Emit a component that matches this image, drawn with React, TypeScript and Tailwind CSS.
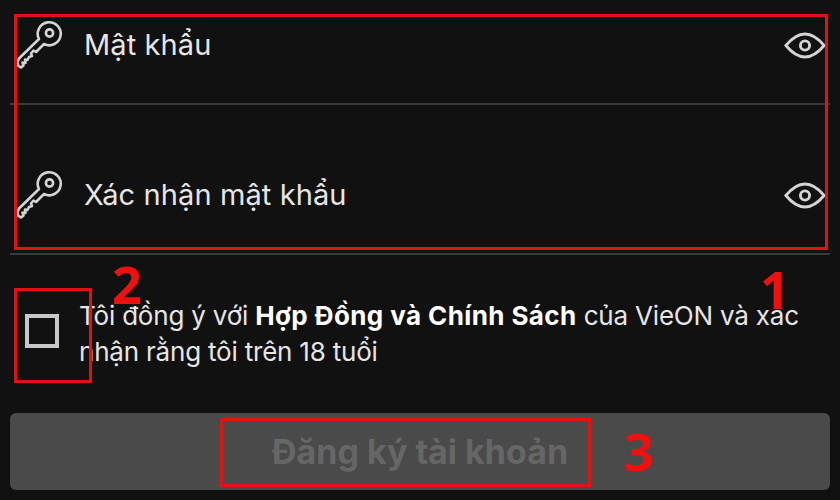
import { ReactNode } from 'react'

function KeyIcon() {
  return (
    <svg viewBox="16 20 48 50" className="w-12 h-[50px] shrink-0" fill="none" stroke="#d4d4d4" strokeWidth="2.6" strokeLinejoin="round" strokeLinecap="round">
      <path d="M39 39 A11.5 11.5 0 1 1 44 44 L36 52 L33.500 50.500 L31 53.500 L32 56 L29 57 L27.500 60 L25 59.500 L25.500 63 L22.500 62.500 L23.500 65.500 L21 67.500 L18 65.500 L17.500 62 L19 58.500 Z" />
      <circle cx="49.500" cy="33" r="3.600" />
    </svg>
  )
}

function EyeIcon() {
  return (
    <svg viewBox="0 0 44 28" className="w-[42px] h-[27px] shrink-0" fill="none" stroke="#d4d4d4" strokeWidth="3">
      <path d="M2 14 C9 5.500 15 2 22 2 C29 2 35 5.500 42 14 C35 22.500 29 26 22 26 C15 26 9 22.500 2 14 Z" />
      <circle cx="22" cy="14" r="4.800" />
    </svg>
  )
}

function PasswordRow({ label, className }: { label: string; className: string }) {
  return (
    <div className={`flex items-center ${className}`}>
      <div className="ml-[6px]">
        <KeyIcon />
      </div>
      <span className="ml-[20px] text-[29px] leading-9 text-[#e6e6e6] tracking-[0.1px]">{label}</span>
      <div className="ml-auto mr-[4px]">
        <EyeIcon />
      </div>
    </div>
  )
}

function Callout({ className }: { className: string }) {
  return <div className={`absolute border-[3px] border-[#e01313] ${className}`} />
}

function Num({ className, children }: { className: string; children: ReactNode }) {
  return (
    <span className={`absolute font-['Open_Sans',sans-serif] font-bold text-[52px] leading-none text-[#f01010] ${className}`}>
      {children}
    </span>
  )
}

export default function App() {
  return (
    <div className="relative w-[840px] h-[500px] overflow-hidden bg-[#111112] font-['Inter',sans-serif] px-[10px]">
      {/* Password fields */}
      <PasswordRow label="Mật khẩu" className="h-[105px] pb-[13px] border-b-2 border-[#3a3a3a]" />
      <PasswordRow label="Xác nhận mật khẩu" className="h-[150px] pt-[32px] border-b-2 border-[#3a3a3a]" />

      {/* Terms */}
      <div className="flex items-start mt-[43px]">
        <div className="w-[34px] h-[34px] ml-[15px] mt-[16px] shrink-0 border-[4px] border-[#c8c8c8]" />
        <p className="ml-[20px] text-[26px] leading-[36px] text-[#e6e6e6] tracking-[-0.2px] whitespace-nowrap">
          Tôi đồng ý với <b className="font-bold text-white tracking-[0.4px]">Hợp Đồng và Chính Sách</b> của VieON và xác
          <br />
          nhận rằng tôi trên 18 tuổi
        </p>
      </div>

      {/* Submit */}
      <div className="mt-[43px] h-[77px] rounded-md bg-[#4a4a4a] flex items-center justify-center">
        <span className="text-[34px] font-bold text-[#666666]">Đăng ký tài khoản</span>
      </div>

      {/* Annotations */}
      <Callout className="left-[14px] top-[14px] w-[814px] h-[236px]" />
      <Callout className="left-[14px] top-[288px] w-[78px] h-[95px]" />
      <Callout className="left-[220px] top-[418px] w-[371px] h-[69px]" />
      <Num className="left-[760px] top-[263px]">1</Num>
      <Num className="left-[112px] top-[258px]">2</Num>
      <Num className="left-[624px] top-[425px]">3</Num>
    </div>
  )
}
